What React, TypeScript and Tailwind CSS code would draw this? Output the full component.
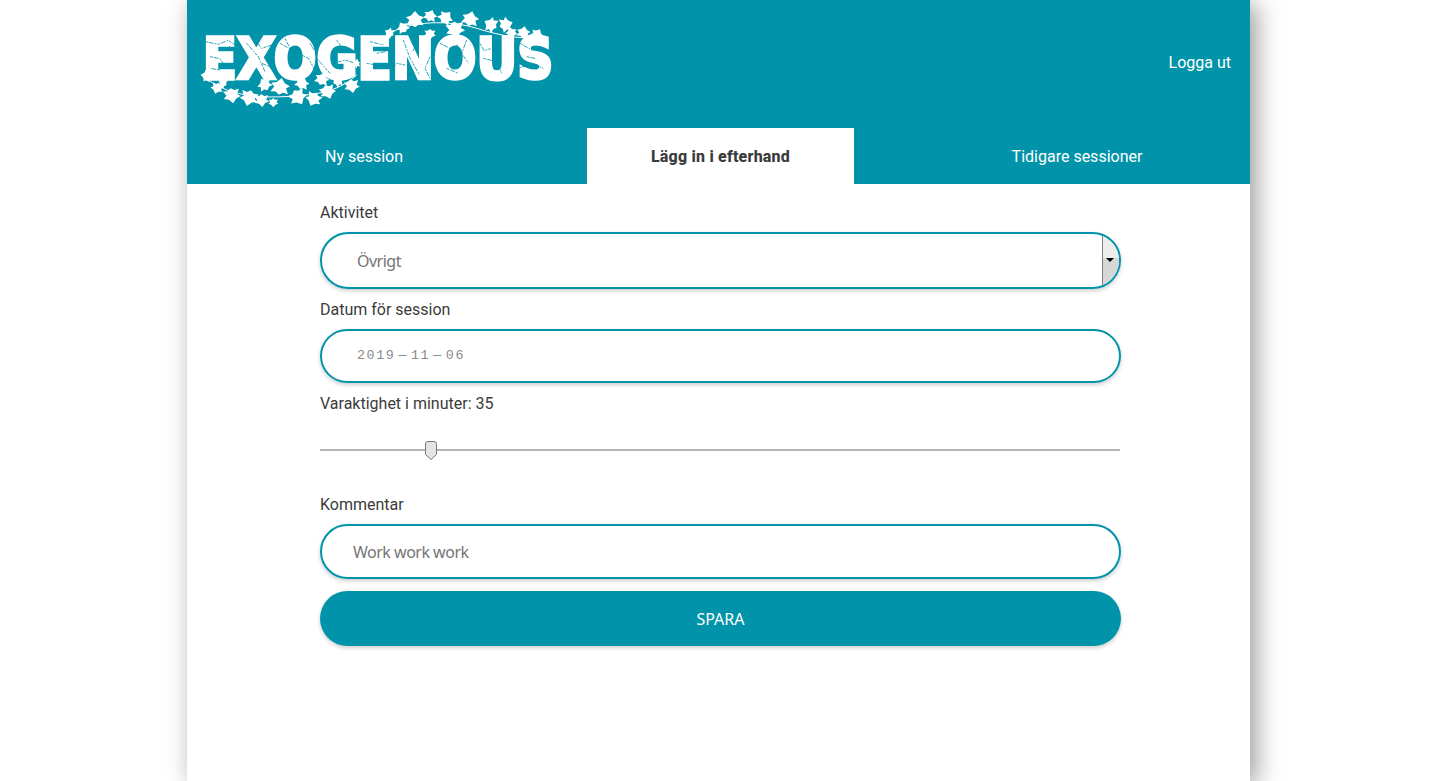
const leaves: [number, number, number, number][] = [
  [52, 228, 280, 0.7], [82, 262, 200, 0.7], [125, 283, 170, 0.95], [178, 290, 195, 1], [215, 298, 175, 0.8],
  [250, 306, 180, 0.55], [270, 264, 10, 1.05], [322, 288, 150, 1], [372, 294, 205, 0.9], [412, 272, 160, 0.9],
  [395, 240, 20, 0.8], [442, 243, 60, 0.7], [485, 255, 170, 0.85], [225, 256, 330, 0.8], [335, 252, 20, 0.8],
  [100, 250, 300, 0.55], [600, 100, 300, 0.6], [640, 85, 330, 0.7], [675, 62, 0, 1], [720, 50, 20, 0.75],
  [765, 55, 40, 0.85], [795, 85, 170, 1.05], [840, 60, 15, 0.95], [905, 75, 300, 0.85], [945, 75, 70, 0.85],
  [965, 100, 340, 0.65], [1000, 100, 10, 0.75], [1040, 105, 30, 0.7], [720, 100, 180, 0.65], [500, 190, 250, 0.5],
]

const cracks = [
  'M45 125l40 8 30-12 20 14', 'M60 170l30 6 14 20', 'M90 210l-30-5', 'M170 130l35 40 20 45', 'M195 120l20 25 30-10',
  'M270 130l45 25 40 20 25 45', 'M300 200l35-20', 'M285 115l15 30', 'M380 175l40 45', 'M440 120l20 30 40 10',
  'M430 190l35-10 25 8', 'M540 125l40 10', 'M530 190l45 8', 'M600 215l20-25 25 5', 'M640 120l18 50 30 55',
  'M750 130l30 15 25-10', 'M770 205l35 15', 'M830 120l-15 40 20 30', 'M880 175l40 10 15 35', 'M915 125l20 30',
  'M990 130l35 20 40-5', 'M985 205l40-15 35 15', 'M1010 170l25 5', 'M720 170l-15 35 15 30', 'M120 140l-20 12',
  'M240 200l-25-10', 'M360 130l12 20', 'M560 160l30-6', 'M680 130l-12 25', 'M870 130l12 22 20-6',
]

function Logo() {
  return (
    <svg viewBox="0 0 1140 360" className="h-[120px] w-[380px] shrink-0">
      <text
        transform="translate(38 238) scale(0.875 1)"
        fontFamily="'DejaVu Sans', sans-serif"
        fontWeight="700"
        fontSize="172"
        fill="#fff"
        stroke="#fff"
        strokeWidth="10"
      >
        EXOGENOUS
      </text>
      <g fill="none" stroke="#0093a9" strokeWidth="2.5" strokeDasharray="9 3 14 4 5 3">
        {cracks.map((d) => (
          <path key={d} d={d} />
        ))}
      </g>
      <g fill="none" stroke="#fff" strokeWidth="3">
        <path d="M40 225C90 280 190 295 280 290S440 280 500 225" />
        <path d="M590 105C660 60 780 60 860 85S990 115 1050 115" />
      </g>
      <g fill="#fff">
        {leaves.map(([x, y, r, s]) => (
          <path
            key={`${x}-${y}`}
            transform={`translate(${x} ${y}) rotate(${r}) scale(${s * 0.85})`}
            d="M0 -34L14 -18 32 -12 20 -2 30 16 12 14 2 22 -2 22 -12 14 -30 16 -20 -2 -32 -12 -14 -18Z"
          />
        ))}
      </g>
    </svg>
  )
}

function Label({ children }: { children: React.ReactNode }) {
  return <label className="block text-base leading-[19px] text-[#3b3b3b]">{children}</label>
}

export default function App() {
  return (
    <div className="min-h-screen bg-white font-['Roboto',sans-serif]">
      <div className="mx-auto min-h-screen w-[1063px] bg-white shadow-[6px_4px_24px_rgba(0,0,0,0.4)]">
        {/* Header */}
        <header className="bg-[#0093a9]">
          <div className="flex h-[128px] items-start justify-between pl-[3px] pr-[19px]">
            <Logo />
            <a className="mt-[53px] text-base leading-[19px] text-white">Logga ut</a>
          </div>
          <nav className="flex h-14 items-center pt-[2px] text-base text-white">
            <div className="w-[354px] text-center">Ny session</div>
            <div className="ml-[46px] -mt-[2px] flex h-14 w-[267px] items-center justify-center bg-white pt-[2px] font-extrabold tracking-[0.2px] text-[#3b3b3b]">
              Lägg in i efterhand
            </div>
            <div className="ml-[50px] w-[346px] text-center">Tidigare sessioner</div>
          </nav>
        </header>

        {/* Form */}
        <form className="ml-[133px] w-[801px] pt-[19px]">
          <Label>Aktivitet</Label>
          <div className="mt-[10px] flex h-[57px] items-stretch overflow-hidden rounded-full border-2 border-[#0093a9] shadow-[0_2px_4px_rgba(0,0,0,0.2)]">
            <div className="flex flex-1 items-center pl-[35px] font-['Noto_Sans',sans-serif] text-base tracking-[-0.5px] text-[#757575]">Övrigt</div>
            <div className="relative w-[17px] border-l border-[#808080] bg-[linear-gradient(#ededed_45%,#d6d6d6_45%)]">
              <span className="absolute left-[3px] top-[24px] h-0 w-0 border-x-4 border-t-4 border-x-transparent border-t-black" />
            </div>
          </div>

          <div className="mt-[11px]">
            <Label>Datum för session</Label>
          </div>
          <div className="mt-[10px] flex h-[54px] items-center gap-[3px] rounded-full border-2 border-[#0093a9] pl-[35px] font-['Liberation_Mono',monospace] text-[13.33px] tracking-[1.6px] text-[#8a8a8a] shadow-[0_2px_4px_rgba(0,0,0,0.2)]">
            <span>2019</span>
            <span>—</span>
            <span>11</span>
            <span>—</span>
            <span>06</span>
          </div>

          <div className="mt-[11px]">
            <Label>Varaktighet i minuter: 35</Label>
          </div>
          <div className="relative mt-[17px] flex h-[40px] items-center">
            <div className="h-[2px] w-[800px] bg-[#b4b4b4]" />
            <svg viewBox="0 0 12 19" className="absolute left-[105px] top-[11px] h-[19px] w-3">
              <path d="M3 .5H9A2.5 2.5 0 0 1 11.5 3V13.5L6 18.5.5 13.5V3A2.5 2.5 0 0 1 3 .5Z" fill="#e4e4e4" stroke="#7a7a7a" />
            </svg>
          </div>

          <div className="mt-[25px]">
            <Label>Kommentar</Label>
          </div>
          <div className="mt-[10px] flex h-[55px] items-center rounded-full border-2 border-[#0093a9] pl-[31px] font-['Noto_Sans',sans-serif] text-base tracking-[-0.5px] text-[#757575] shadow-[0_2px_4px_rgba(0,0,0,0.2)]">
            Work work work
          </div>

          <button
            type="button"
            className="mt-3 flex h-[55px] w-full items-center justify-center rounded-full bg-[#0093a9] font-['Noto_Sans',sans-serif] text-base text-white shadow-[0_2px_4px_rgba(0,0,0,0.2)]"
          >
            SPARA
          </button>
        </form>
      </div>
    </div>
  )
}
